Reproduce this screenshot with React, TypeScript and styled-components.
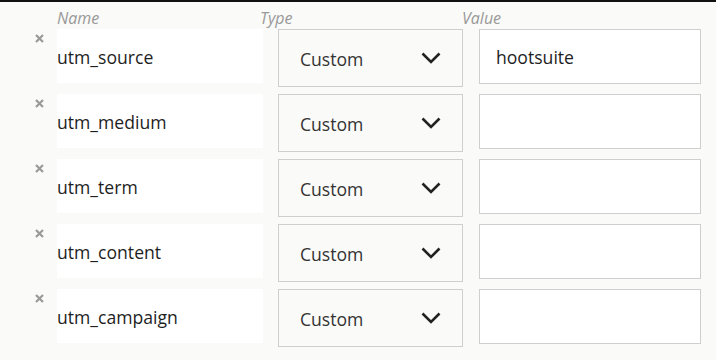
import React from 'react';
import styled, { createGlobalStyle } from 'styled-components';

const GlobalStyle = createGlobalStyle`
  html, body {
    margin: 0;
    padding: 0;
    background: #fafaf8;
  }
  body {
    font-family: 'Open Sans', 'Noto Sans', sans-serif;
  }
`;

const params = [
  { name: 'utm_source', value: 'hootsuite' },
  { name: 'utm_medium', value: '' },
  { name: 'utm_term', value: '' },
  { name: 'utm_content', value: '' },
  { name: 'utm_campaign', value: '' },
];

function App() {
  return (
    <>
      <GlobalStyle />
      <Panel>
        <HeaderRow>
          <span />
          <Label>Name</Label>
          <Label $shift={-18}>Type</Label>
          <Label $shift={-16}>Value</Label>
        </HeaderRow>
        {params.map((p) => (
          <Row key={p.name}>
            <RemoveCell>
              <RemoveButton aria-label='remove'>
                <svg width='9' height='9' viewBox='0 0 9 9'>
                  <path
                    d='M1 1 L8 8 M8 1 L1 8'
                    stroke='#9a9a9a'
                    strokeWidth='2.2'
                  />
                </svg>
              </RemoveButton>
            </RemoveCell>
            <NameBox>{p.name}</NameBox>
            <TypeSelect>
              <span>Custom</span>
              <svg width='20' height='12' viewBox='0 0 20 12'>
                <path
                  d='M1.5 1.5 L10 10 L18.5 1.5'
                  fill='none'
                  stroke='#222'
                  strokeWidth='2.6'
                />
              </svg>
            </TypeSelect>
            <ValueInput>{p.value}</ValueInput>
          </Row>
        ))}
      </Panel>
    </>
  );
}

export default App;

// Styled Components
const Panel = styled.div`
  width: 716px;
  height: 360px;
  box-sizing: border-box;
  border-top: 2px solid #111;
  overflow: hidden;
`;

const Row = styled.div`
  display: grid;
  grid-template-columns: 42px 206px 185px 223px;
  column-gap: 15px;
  align-items: start;
  margin-bottom: 7px;
`;

const HeaderRow = styled(Row)`
  height: 27px;
  margin-bottom: 0;
`;

const Label = styled.div<{ $shift?: number }>`
  font-size: 16px;
  font-style: italic;
  color: #999;
  line-height: 18px;
  padding-top: 7px;
  margin-left: ${(p) => p.$shift ?? 0}px;
`;

const RemoveCell = styled.div`
  display: flex;
  justify-content: center;
  padding-left: 39px;
  padding-top: 5px;
  width: 0;
`;

const RemoveButton = styled.span`
  display: inline-flex;
  cursor: pointer;
`;

const NameBox = styled.div`
  height: 54px;
  background: #fff;
  display: flex;
  align-items: center;
  font-size: 17.6px;
  color: #1e1e1e;
  padding-top: 2px;
  box-sizing: border-box;
`;

const TypeSelect = styled.div`
  height: 58px;
  box-sizing: border-box;
  border: 1px solid #cfcfcf;
  background: #fafaf8;
  display: flex;
  align-items: center;
  justify-content: space-between;
  padding: 0 21px;
  font-size: 17.6px;
  color: #333;

  span {
    padding-top: 1px;
  }
`;

const ValueInput = styled.div`
  height: 55px;
  margin-left: 1px;
  box-sizing: border-box;
  border: 1px solid #cfcfcf;
  background: #fff;
  display: flex;
  align-items: center;
  padding: 1px 16px 0;
  font-size: 17.6px;
  color: #1e1e1e;
`;
